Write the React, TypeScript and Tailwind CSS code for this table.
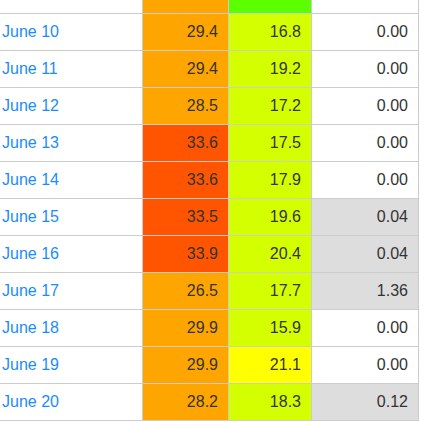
const rows = [
  { day: 'June 10', max: '29.4', maxBg: 'bg-[#ffa500]', min: '16.8', minBg: 'bg-[#d4ff00]', rain: '0.00', rainBg: 'bg-white' },
  { day: 'June 11', max: '29.4', maxBg: 'bg-[#ffa500]', min: '19.2', minBg: 'bg-[#d4ff00]', rain: '0.00', rainBg: 'bg-white' },
  { day: 'June 12', max: '28.5', maxBg: 'bg-[#ffa500]', min: '17.2', minBg: 'bg-[#d4ff00]', rain: '0.00', rainBg: 'bg-white' },
  { day: 'June 13', max: '33.6', maxBg: 'bg-[#ff5500]', min: '17.5', minBg: 'bg-[#d4ff00]', rain: '0.00', rainBg: 'bg-white' },
  { day: 'June 14', max: '33.6', maxBg: 'bg-[#ff5500]', min: '17.9', minBg: 'bg-[#d4ff00]', rain: '0.00', rainBg: 'bg-white' },
  { day: 'June 15', max: '33.5', maxBg: 'bg-[#ff5500]', min: '19.6', minBg: 'bg-[#d4ff00]', rain: '0.04', rainBg: 'bg-[#dddddd]' },
  { day: 'June 16', max: '33.9', maxBg: 'bg-[#ff5500]', min: '20.4', minBg: 'bg-[#d4ff00]', rain: '0.04', rainBg: 'bg-[#dddddd]' },
  { day: 'June 17', max: '26.5', maxBg: 'bg-[#ffa500]', min: '17.7', minBg: 'bg-[#d4ff00]', rain: '1.36', rainBg: 'bg-[#dddddd]' },
  { day: 'June 18', max: '29.9', maxBg: 'bg-[#ffa500]', min: '15.9', minBg: 'bg-[#d4ff00]', rain: '0.00', rainBg: 'bg-white' },
  { day: 'June 19', max: '29.9', maxBg: 'bg-[#ffa500]', min: '21.1', minBg: 'bg-[#ffff00]', rain: '0.00', rainBg: 'bg-white' },
  { day: 'June 20', max: '28.2', maxBg: 'bg-[#ffa500]', min: '18.3', minBg: 'bg-[#d4ff00]', rain: '0.12', rainBg: 'bg-[#dddddd]' },
];

export default function App() {
  return (
    <div className="w-[433px] h-[422px] overflow-hidden bg-white font-['Liberation_Sans',Arial,sans-serif] text-[16px]">
      <div className="w-[419px]">
        {/* partial row above */}
        <div className="flex h-[14px] border-b border-[#cccccc]">
          <div className="w-[143px] border-r border-[#cccccc]" />
          <div className="w-[86px] bg-[#ffa500] border-r border-[#cccccc]" />
          <div className="w-[83px] bg-[#5cff00] border-r border-[#cccccc]" />
          <div className="w-[107px] bg-white border-r border-[#cccccc]" />
        </div>

        {rows.map((r) => (
          <div key={r.day} className="flex h-[37px] border-b border-[#cccccc]">
            <div className="w-[143px] border-r border-[#cccccc] flex items-center pl-[2px] text-[#1a8cff]">
              {r.day}
            </div>
            <div className={`w-[86px] border-r border-[#cccccc] flex items-center justify-end pr-[10px] text-[#333333] ${r.maxBg}`}>
              {r.max}
            </div>
            <div className={`w-[83px] border-r border-[#cccccc] flex items-center justify-end pr-[10px] text-[#333333] ${r.minBg}`}>
              {r.min}
            </div>
            <div className={`w-[107px] border-r border-[#cccccc] flex items-center justify-end pr-[10px] text-[#333333] ${r.rainBg}`}>
              {r.rain}
            </div>
          </div>
        ))}
      </div>
    </div>
  );
}
